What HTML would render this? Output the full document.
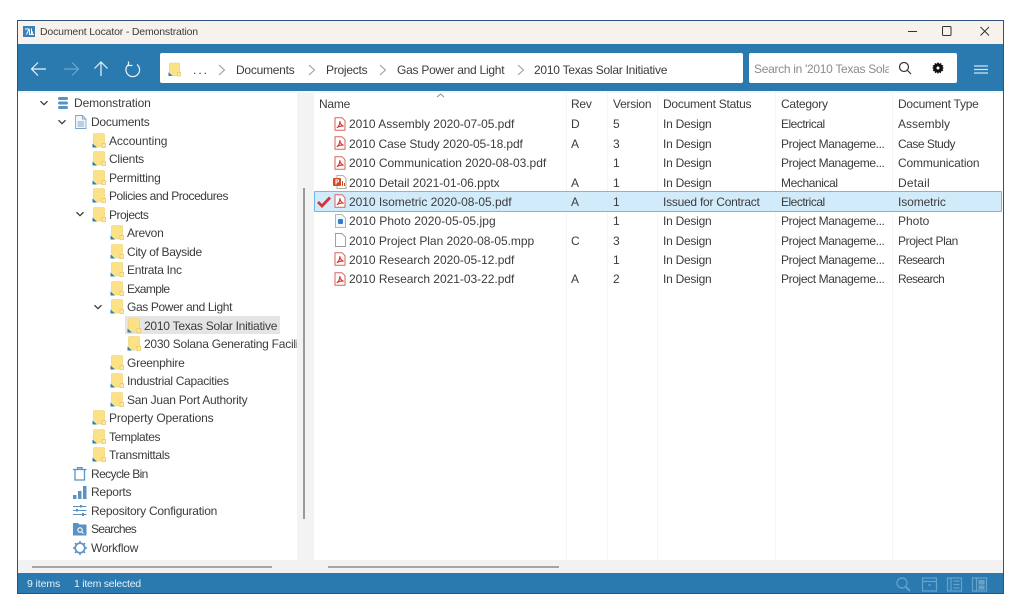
<!DOCTYPE html>
<html><head><meta charset="utf-8"><style>
html,body{margin:0;padding:0;width:1024px;height:614px;overflow:hidden;background:#fff}
body{position:relative;font-family:"Liberation Sans",sans-serif;font-size:12px;color:#3c3c3c;letter-spacing:-.25px}
.a{position:absolute}
.t{position:absolute;white-space:nowrap;line-height:16px;height:16px}
.f{letter-spacing:-.03px}
.w{letter-spacing:-.5px}
.z{letter-spacing:0}
svg{position:absolute;overflow:visible}
.sep{position:absolute;top:92px;width:1px;height:468px;background:#f3f5f8}
</style></head><body>
<svg width="0" height="0" style="position:absolute">
<defs>
<symbol id="folder" viewBox="0 0 14 15"><path d="M1.500 1.500Q1.500.5 2.500.5H11.500Q12.500.5 12.500 1.500V14H1.500Z" fill="#fbe288" stroke="#f0ce68" stroke-width=".6"/><path d="M.5 14.500V10.500L5 14.500Z" fill="#2f7fb5"/><rect x="10" y="10.500" width="3.500" height="4" fill="#fbe9a6" stroke="#e8c45c" stroke-width=".7"/></symbol>
<symbol id="pdf" viewBox="0 0 12 14"><path d="M1 .7H8L11 3.700V13.300H1Z" fill="#fff" stroke="#d9625a" stroke-width="1"/><path d="M2.800 10.800C4.500 10 6 7 5.800 4.200 6.200 7 7.500 8.600 9.600 9.200 7.400 8.800 4.800 9.400 2.800 10.800Z" fill="none" stroke="#d4352c" stroke-width="1.100"/></symbol>
<symbol id="chev" viewBox="0 0 10 10"><path d="M1.500 3.200L5 6.700 8.500 3.200" fill="none" stroke="#333" stroke-width="1.200"/></symbol>
<symbol id="gt" viewBox="0 0 8 12"><path d="M1 1L6.500 6 1 11" fill="none" stroke="#9a9a9a" stroke-width="1"/></symbol>
</defs></svg>

<!-- window -->
<div class="a" style="left:17px;top:20px;width:985px;height:572px;border:1px solid #2f4f7f;background:#fff"></div>
<div class="a" style="left:18px;top:21px;width:985px;height:23px;background:#f7f3ec"></div>
<div class="a" style="left:18px;top:44px;width:985px;height:47px;background:#2a7ab0"></div>
<div class="a" style="left:297px;top:91px;width:17px;height:469px;background:#f3f3f3"></div>
<div class="a" style="left:18px;top:91px;width:985px;height:2px;background:#f4f6f8"></div>
<div class="a" style="left:18px;top:560px;width:985px;height:13px;background:#f2f2f2"></div>
<div class="a" style="left:18px;top:573px;width:985px;height:20px;background:#2a7ab0"></div>

<!-- title bar -->
<svg style="left:23px;top:26px" width="12" height="11" viewBox="0 0 12 11"><rect width="12" height="11" fill="#3d7fb8"/><path d="M2 3H6L3.500 8.500M6.500 3.500V8.500H7.500Q10 8 9.500 5.500M8.500 2.500V8.500H11" fill="none" stroke="#fff" stroke-width="1"/></svg>
<div class="t" style="left:40px;top:24px;font-size:10.500px;letter-spacing:-.17px">Document Locator - Demonstration</div>
<svg style="left:900px;top:24px" width="100" height="14"><path d="M8 7.500H17" stroke="#333" stroke-width="1"/><rect x="42.500" y="2.500" width="8.500" height="9" rx="1" fill="none" stroke="#333" stroke-width="1"/><path d="M80.500 3L89 11.500M89 3L80.500 11.500" stroke="#333" stroke-width="1"/></svg>

<!-- toolbar icons -->
<svg style="left:28px;top:58px" width="120" height="22" fill="none" stroke="#e8f2f9" stroke-width="1.200">
<path d="M4 11H18M10 4.500L3.500 11 10 17.500"/>
<path d="M36 11H50M44 4.500L50.500 11 44 17.500" stroke="#6ca6cf"/>
<path d="M73 4V18M66.500 10.500L73 4 79.500 10.500"/>
<path d="M100.500 6.500A6.800 6.800 0 1 0 109 6.500M100.500 3.500V7.500H104.500" />
</svg>

<!-- address bar -->
<div class="a" style="left:160px;top:53px;width:583px;height:30px;background:#fff;border-radius:2px"></div>
<svg style="left:168px;top:62px" width="13" height="15"><use href="#folder" width="13" height="15"/></svg>
<div class="t" style="left:193px;top:62px;letter-spacing:2px">...</div>
<svg style="left:218px;top:64px" width="8" height="12"><use href="#gt" width="8" height="12"/></svg>
<div class="t" style="left:236px;top:62px">Documents</div>
<svg style="left:308px;top:64px" width="8" height="12"><use href="#gt" width="8" height="12"/></svg>
<div class="t" style="left:326px;top:62px">Projects</div>
<svg style="left:379px;top:64px" width="8" height="12"><use href="#gt" width="8" height="12"/></svg>
<div class="t" style="left:397px;top:62px">Gas Power and Light</div>
<svg style="left:517px;top:64px" width="8" height="12"><use href="#gt" width="8" height="12"/></svg>
<div class="t" style="left:534px;top:62px">2010 Texas Solar Initiative</div>

<!-- search -->
<div class="a" style="left:749px;top:53px;width:208px;height:30px;background:#fff;border-radius:2px"></div>
<div class="t" style="left:754px;top:61px;color:#8c8c8c;width:135px;overflow:hidden;letter-spacing:-.3px">Search in '2010 Texas Sola</div>
<svg style="left:898px;top:61px" width="14" height="14" fill="none" stroke="#333" stroke-width="1.200"><circle cx="6" cy="6" r="4.500"/><path d="M9.500 9.500L13 13"/></svg>
<svg style="left:932px;top:62px" width="12" height="12" viewBox="0 0 12 12"><path d="M6 0L7.200 1.800 9.200 1 9.500 3 11.500 3.500 10.500 5.300 12 6 10.500 7 11.300 9 9.200 9.300 8.800 11.300 7 10.300 6 12 5 10.300 3 11.300 2.800 9.300 .7 9 1.500 7 0 6 1.500 5.300.5 3.500 2.500 3 2.800 1 4.800 1.800Z" fill="#111"/><circle cx="6" cy="6" r="1.500" fill="#fff"/></svg>
<svg style="left:974px;top:65px" width="15" height="9" stroke="#cfe3f1" stroke-width="1.200"><path d="M0 1H14M0 4.500H14M0 8H14"/></svg>

<!-- tree -->
<svg style="left:39px;top:98px" width="10" height="10"><use href="#chev" width="10" height="10"/></svg>
<svg style="left:58px;top:97px" width="11" height="13" fill="#5b92c4"><rect x="0" y="0" width="10" height="3" rx="1.500"/><rect x="0" y="4.500" width="10" height="3" rx="1.500"/><rect x="0" y="9" width="10" height="3" rx="1.500"/></svg>
<div class="t" style="left:74px;top:95px;letter-spacing:-.1px">Demonstration</div>
<svg style="left:57px;top:117px" width="10" height="10"><use href="#chev" width="10" height="10"/></svg>
<svg style="left:75px;top:115px" width="12" height="14" fill="none" stroke="#7ea6c9" stroke-width=".9"><path d="M.5.500H7.500L11 4V13.500H.5Z" fill="#f2f6fa"/><path d="M7.500.500V4H11M2.500 7H9M2.500 9H9M2.500 11H9"/></svg>
<div class="t" style="left:91px;top:114px">Documents</div>

<svg style="left:92px;top:133px" width="14" height="15"><use href="#folder" width="14" height="15"/></svg><div class="t" style="left:109px;top:133px;letter-spacing:-.1px">Accounting</div>
<svg style="left:92px;top:151px" width="14" height="15"><use href="#folder" width="14" height="15"/></svg><div class="t" style="left:109px;top:151px">Clients</div>
<svg style="left:92px;top:170px" width="14" height="15"><use href="#folder" width="14" height="15"/></svg><div class="t" style="left:109px;top:170px">Permitting</div>
<svg style="left:92px;top:188px" width="14" height="15"><use href="#folder" width="14" height="15"/></svg><div class="t" style="left:109px;top:188px;letter-spacing:-.45px">Policies and Procedures</div>
<svg style="left:75px;top:209px" width="10" height="10"><use href="#chev" width="10" height="10"/></svg>
<svg style="left:92px;top:207px" width="14" height="15"><use href="#folder" width="14" height="15"/></svg><div class="t w" style="left:109px;top:207px">Projects</div>
<svg style="left:110px;top:225px" width="14" height="15"><use href="#folder" width="14" height="15"/></svg><div class="t" style="left:127px;top:225px">Arevon</div>
<svg style="left:110px;top:244px" width="14" height="15"><use href="#folder" width="14" height="15"/></svg><div class="t" style="left:127px;top:244px;letter-spacing:-.35px">City of Bayside</div>
<svg style="left:110px;top:262px" width="14" height="15"><use href="#folder" width="14" height="15"/></svg><div class="t" style="left:127px;top:262px;letter-spacing:-.3px">Entrata Inc</div>
<svg style="left:110px;top:281px" width="14" height="15"><use href="#folder" width="14" height="15"/></svg><div class="t" style="left:127px;top:281px;letter-spacing:-.6px">Example</div>
<svg style="left:93px;top:302px" width="10" height="10"><use href="#chev" width="10" height="10"/></svg>
<svg style="left:110px;top:299px" width="14" height="15"><use href="#folder" width="14" height="15"/></svg><div class="t" style="left:127px;top:299px;letter-spacing:-.37px">Gas Power and Light</div>
<div class="a" style="left:125px;top:316px;width:155px;height:18px;background:#e4e4e4"></div>
<svg style="left:127px;top:318px" width="14" height="15"><use href="#folder" width="14" height="15"/></svg><div class="t" style="left:144px;top:318px">2010 Texas Solar Initiative</div>
<svg style="left:127px;top:336px" width="14" height="15"><use href="#folder" width="14" height="15"/></svg><div class="t" style="left:144px;top:336px;width:153px;overflow:hidden">2030 Solana Generating Facility</div>
<svg style="left:110px;top:355px" width="14" height="15"><use href="#folder" width="14" height="15"/></svg><div class="t" style="left:127px;top:355px">Greenphire</div>
<svg style="left:110px;top:373px" width="14" height="15"><use href="#folder" width="14" height="15"/></svg><div class="t" style="left:127px;top:373px;letter-spacing:-.3px">Industrial Capacities</div>
<svg style="left:110px;top:392px" width="14" height="15"><use href="#folder" width="14" height="15"/></svg><div class="t" style="left:127px;top:392px">San Juan Port Authority</div>
<svg style="left:92px;top:410px" width="14" height="15"><use href="#folder" width="14" height="15"/></svg><div class="t" style="left:109px;top:410px;letter-spacing:-.15px">Property Operations</div>
<svg style="left:92px;top:429px" width="14" height="15"><use href="#folder" width="14" height="15"/></svg><div class="t" style="left:109px;top:429px;letter-spacing:-.4px">Templates</div>
<svg style="left:92px;top:447px" width="14" height="15"><use href="#folder" width="14" height="15"/></svg><div class="t" style="left:109px;top:447px;letter-spacing:-.35px">Transmittals</div>

<svg style="left:73px;top:467px" width="14" height="14" fill="none" stroke="#5b92c4" stroke-width="1.300"><path d="M0 2.500H13.500M4.500 2.500V.7H9V2.500M2 2.500V13H11.500V2.500"/></svg>
<div class="t" style="left:91px;top:466px;letter-spacing:-.6px">Recycle Bin</div>
<svg style="left:73px;top:486px" width="14" height="13" fill="#5b92c4"><rect x="0" y="9" width="3.500" height="4"/><rect x="5" y="5" width="3.500" height="8"/><rect x="10" y="0" width="3.500" height="13"/></svg>
<div class="t" style="left:91px;top:484px">Reports</div>
<svg style="left:73px;top:504px" width="14" height="13" fill="#5b92c4" stroke="#5b92c4"><path d="M0 2.500H13.500M0 6.500H13.500M0 10.500H13.500" stroke-width="1"/><rect x="7" y="1" width="2" height="2.500" stroke="none"/><rect x="3" y="5" width="2" height="2.500" stroke="none"/><rect x="9" y="9" width="2" height="3" stroke="none"/></svg>
<div class="t" style="left:91px;top:503px">Repository Configuration</div>
<svg style="left:73px;top:522px" width="14" height="14"><path d="M0 1H5L6.500 2.500H13.500V13.500H0Z" fill="#5b92c4"/><circle cx="7" cy="8" r="2.200" fill="none" stroke="#fff" stroke-width="1.100"/><path d="M8.600 9.600L10.500 11.500" stroke="#fff" stroke-width="1.100"/></svg>
<div class="t" style="left:91px;top:521px;letter-spacing:-.7px">Searches</div>
<svg style="left:73px;top:541px" width="14" height="14" fill="none" stroke="#5b92c4"><circle cx="7" cy="7" r="4.800" stroke-width="1.700"/><path d="M7 0V2.500M7 11.500V14M0 7H2.500M11.500 7H14M2 2L3.700 3.700M10.300 10.300L12 12M12 2L10.300 3.700M3.700 10.300L2 12" stroke-width="1.500"/></svg>
<div class="t" style="left:91px;top:540px">Workflow</div>

<!-- scrollbars -->
<div class="a" style="left:303px;top:188px;width:2px;height:331px;background:#9a9a9a"></div>
<div class="a" style="left:32px;top:566px;width:240px;height:2px;background:#a5a5a5"></div>
<div class="a" style="left:328px;top:566px;width:231px;height:2px;background:#a5a5a5"></div>

<!-- column separators -->
<div class="sep" style="left:566px"></div><div class="sep" style="left:607px"></div><div class="sep" style="left:657px"></div><div class="sep" style="left:775px"></div><div class="sep" style="left:892px"></div>

<!-- selected row -->
<div class="a" style="left:314px;top:191px;width:686px;height:19px;background:#d2ebfb;border:1px solid #72bce4;border-radius:1px"></div>

<!-- header -->
<svg style="left:436px;top:93px" width="9" height="5" fill="none" stroke="#888"><path d="M1 4L4.500 1 8 4"/></svg>
<div class="t" style="left:319px;top:96px">Name</div><div class="t" style="left:571px;top:96px">Rev</div><div class="t" style="left:613px;top:96px">Version</div><div class="t" style="left:663px;top:96px">Document Status</div><div class="t" style="left:781px;top:96px">Category</div><div class="t" style="left:898px;top:96px">Document Type</div>

<!-- rows -->
<svg style="left:334px;top:117px" width="12" height="14"><use href="#pdf" width="12" height="14"/></svg>
<div class="t f" style="left:349px;top:116px">2010 Assembly 2020-07-05.pdf</div><div class="t" style="left:571px;top:116px">D</div><div class="t" style="left:613px;top:116px">5</div><div class="t" style="left:663px;top:116px">In Design</div><div class="t w" style="left:781px;top:116px">Electrical</div><div class="t z" style="left:898px;top:116px">Assembly</div>

<svg style="left:334px;top:136px" width="12" height="14"><use href="#pdf" width="12" height="14"/></svg>
<div class="t f" style="left:349px;top:136px;letter-spacing:-.1px">2010 Case Study 2020-05-18.pdf</div><div class="t" style="left:571px;top:136px">A</div><div class="t" style="left:613px;top:136px">3</div><div class="t" style="left:663px;top:136px">In Design</div><div class="t" style="left:781px;top:136px;letter-spacing:-.38px">Project Manageme...</div><div class="t w" style="left:898px;top:136px">Case Study</div>

<svg style="left:334px;top:156px" width="12" height="14"><use href="#pdf" width="12" height="14"/></svg>
<div class="t f" style="left:349px;top:155px">2010 Communication 2020-08-03.pdf</div><div class="t" style="left:613px;top:155px">1</div><div class="t" style="left:663px;top:155px">In Design</div><div class="t" style="left:781px;top:155px;letter-spacing:-.38px">Project Manageme...</div><div class="t" style="left:898px;top:155px;letter-spacing:-.15px">Communication</div>

<svg style="left:333px;top:175px" width="14" height="14"><path d="M4 .5H10L13 3.500V13.500H4Z" fill="#fff" stroke="#999" stroke-width=".8"/><rect x="0" y="3" width="8" height="8" rx="1" fill="#d24a1f"/><path d="M3 9.500V4.800H5Q6.200 5.500 5 7H3" fill="none" stroke="#fff"/><path d="M9.500 6V11M11.500 8V11" stroke="#d24a1f"/></svg>
<div class="t f" style="left:349px;top:175px">2010 Detail 2021-01-06.pptx</div><div class="t" style="left:571px;top:175px">A</div><div class="t" style="left:613px;top:175px">1</div><div class="t" style="left:663px;top:175px">In Design</div><div class="t" style="left:781px;top:175px;letter-spacing:-.4px">Mechanical</div><div class="t" style="left:898px;top:175px;letter-spacing:.2px">Detail</div>

<svg style="left:317px;top:196px" width="14" height="11"><path d="M1 6L5 10 13 1.500" fill="none" stroke="#d8333a" stroke-width="2.800"/></svg>
<svg style="left:334px;top:194px" width="12" height="14"><use href="#pdf" width="12" height="14"/></svg>
<div class="t f" style="left:349px;top:194px">2010 Isometric 2020-08-05.pdf</div><div class="t" style="left:571px;top:194px">A</div><div class="t" style="left:613px;top:194px">1</div><div class="t" style="left:663px;top:194px">Issued for Contract</div><div class="t w" style="left:781px;top:194px">Electrical</div><div class="t" style="left:898px;top:194px;letter-spacing:-.1px">Isometric</div>

<svg style="left:335px;top:214px" width="11" height="14"><path d="M.5.500H7L10.500 4V13.500H.5Z" fill="#f5f8fb" stroke="#9aa5b0" stroke-width=".8"/><rect x="3" y="5" width="5" height="5" rx="1" fill="#2f7fd0"/></svg>
<div class="t f" style="left:349px;top:213px;letter-spacing:.05px">2010 Photo 2020-05-05.jpg</div><div class="t" style="left:613px;top:213px">1</div><div class="t" style="left:663px;top:213px">In Design</div><div class="t" style="left:781px;top:213px;letter-spacing:-.38px">Project Manageme...</div><div class="t z" style="left:898px;top:213px">Photo</div>

<svg style="left:335px;top:233px" width="11" height="14"><path d="M.5.500H7L10.500 4V13.500H.5Z" fill="#fff" stroke="#9a9a9a" stroke-width=".9"/></svg>
<div class="t f" style="left:349px;top:233px">2010 Project Plan 2020-08-05.mpp</div><div class="t" style="left:571px;top:233px">C</div><div class="t" style="left:613px;top:233px">3</div><div class="t" style="left:663px;top:233px">In Design</div><div class="t" style="left:781px;top:233px;letter-spacing:-.38px">Project Manageme...</div><div class="t" style="left:898px;top:233px;letter-spacing:-.4px">Project Plan</div>

<svg style="left:334px;top:252px" width="12" height="14"><use href="#pdf" width="12" height="14"/></svg>
<div class="t f" style="left:349px;top:252px">2010 Research 2020-05-12.pdf</div><div class="t" style="left:613px;top:252px">1</div><div class="t" style="left:663px;top:252px">In Design</div><div class="t" style="left:781px;top:252px;letter-spacing:-.38px">Project Manageme...</div><div class="t" style="left:898px;top:252px;letter-spacing:-.65px">Research</div>

<svg style="left:334px;top:272px" width="12" height="14"><use href="#pdf" width="12" height="14"/></svg>
<div class="t f" style="left:349px;top:271px">2010 Research 2021-03-22.pdf</div><div class="t" style="left:571px;top:271px">A</div><div class="t" style="left:613px;top:271px">2</div><div class="t" style="left:663px;top:271px">In Design</div><div class="t" style="left:781px;top:271px;letter-spacing:-.38px">Project Manageme...</div><div class="t" style="left:898px;top:271px;letter-spacing:-.65px">Research</div>

<!-- status bar -->
<div class="t" style="left:27px;top:576px;font-size:10.500px;color:#e6f0f7;letter-spacing:-.1px">9 items</div>
<div class="t" style="left:74px;top:576px;font-size:10.500px;color:#e6f0f7">1 item selected</div>
<svg style="left:895px;top:577px" width="94" height="15" fill="none" stroke="#66a3cc" stroke-width="1.200">
<circle cx="7" cy="6" r="5"/><path d="M10.500 9.500L15 14" stroke-width="1.800"/>
<rect x="27.500" y="1" width="14" height="13"/><path d="M27.500 4.500H41.500M33 8H36"/>
<rect x="52.500" y="1" width="14" height="13"/><path d="M56 1V14M58.500 4H64.500M58.500 7.500H64.500M58.500 11H64.500"/>
<rect x="77.500" y="1" width="14" height="13"/><path d="M81.500 1V14"/><rect x="84" y="3.500" width="5" height="3.500" fill="#66a3cc"/><rect x="84" y="9" width="5" height="3" fill="#66a3cc"/>
</svg>
</body></html>
